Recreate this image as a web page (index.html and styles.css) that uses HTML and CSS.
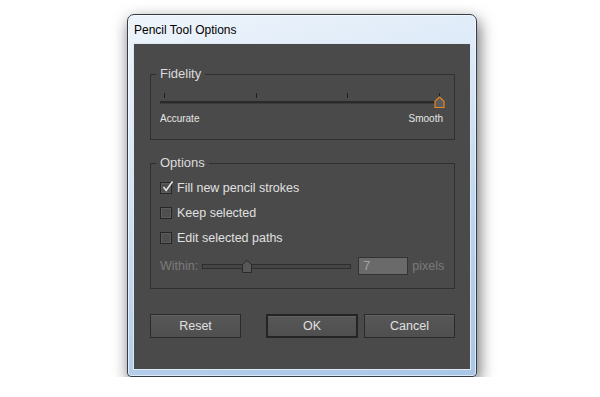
FILE: index.html
```html
<!DOCTYPE html>
<html lang="en">
<head>
  <meta charset="UTF-8" />
  <title>Pencil Tool Options</title>
  <link rel="stylesheet" href="styles.css">
</head>
<body>
  <div class="window">
    <div class="titlebar">Pencil Tool Options</div>

    <div class="content">
      <!-- Fidelity -->
      <fieldset class="group fidelity">
        <legend>Fidelity</legend>
        <div class="slider">
          <div class="ticks"><span></span><span></span><span></span><span></span></div>
          <div class="track"></div>
          <svg class="thumb" width="11" height="12" viewBox="0 0 11 12">
            <path d="M1 11.5V5.2L5.5 1L10 5.2V11.5Z" fill="#5c5c5c" stroke="#e5871f" stroke-width="1.2"/>
          </svg>
        </div>
        <div class="scale-labels">
          <span>Accurate</span>
          <span>Smooth</span>
        </div>
      </fieldset>

      <!-- Options -->
      <fieldset class="group options">
        <legend>Options</legend>
        <div class="check-row">
          <span class="checkbox">
            <svg width="14" height="14" viewBox="0 0 14 14">
              <path d="M2.5 7L5.2 10.5L11.5 1.5" fill="none" stroke="#e2e2e2" stroke-width="1.6"/>
            </svg>
          </span>
          Fill new pencil strokes
        </div>
        <div class="check-row"><span class="checkbox"></span>Keep selected</div>
        <div class="check-row"><span class="checkbox"></span>Edit selected paths</div>
        <div class="within-row">
          <span class="dim">Within:</span>
          <div class="mini-slider">
            <div class="mini-track"></div>
            <svg class="mini-thumb" width="10" height="13" viewBox="0 0 10 13">
              <path d="M0.5 12.5V4.5L5 0.5L9.5 4.5V12.5Z" fill="#585858" stroke="#2a2a2a" stroke-width="1"/>
            </svg>
          </div>
          <div class="num-box">7</div>
          <span class="dim">pixels</span>
        </div>
      </fieldset>

      <div class="buttons">
        <button class="btn reset">Reset</button>
        <button class="btn ok">OK</button>
        <button class="btn">Cancel</button>
      </div>
    </div>
  </div>
</body>
</html>
```

FILE: styles.css
```css
:root {
  --panel: #4a4a4a;
  --line: #2f2f2f;
  --text: #e0e0e0;
  --dim: #7b7b7b;
}

* { box-sizing: border-box; }

body {
  margin: 0;
  background: #fff;
  padding: 14px 0 0 127px;
  font-family: "Liberation Sans", Arial, sans-serif;
}

/* Aero window frame */
.window {
  width: 350px;
  height: 363px;
  border: 1px solid #333c47;
  border-radius: 7px 7px 4px 4px;
  background: linear-gradient(165deg, #eef4fb 0%, #dbe9f8 30%, #c3daf2 55%, #b2cdea 80%, #a9c7e7 100%);
  box-shadow: 2px 6px 16px rgba(0,0,0,0.6), inset 0 0 0 1px rgba(255,255,255,0.6);
  padding: 0 5px 6px;
  display: flex;
  flex-direction: column;
}

.titlebar {
  height: 28px;
  line-height: 30px;
  padding-left: 1px;
  font-size: 12px;
  color: #000;
}

.content {
  flex: 1;
  background: var(--panel);
  border: 1px solid #dde8f4;
  padding: 23px 15px 0 16px;
}

/* Group boxes */
.group {
  margin: 0;
  min-width: 0;
  border: 1px solid var(--line);
  padding: 0 9px;
}
.group legend {
  margin-left: -4px;
  padding: 0 4px;
  height: 14px;
  line-height: 14px;
  font-size: 13px;
  color: #dcdcdc;
}

.fidelity { padding-top: 11px; padding-bottom: 14px; }

.slider {
  position: relative;
  height: 16px;
  padding-top: 1px;
}
.ticks {
  display: flex;
  justify-content: space-between;
  padding: 0 5px 0 4px;
  height: 5px;
}
.ticks span {
  width: 1px;
  background: #1e1e1e;
}
.track {
  margin-top: 3px;
  width: 280px;
  height: 3px;
  background: #2a2a2a;
  border-bottom: 1px solid #3a3a3a;
}
.thumb {
  position: absolute;
  left: 274px;
  top: 4px;
}

.scale-labels {
  display: flex;
  justify-content: space-between;
  margin-top: 5px;
  padding-right: 2px;
  line-height: 12px;
  font-size: 10px;
  color: #e6e6e6;
}

.options {
  margin-top: 16px;
  padding-top: 5px;
  padding-bottom: 10px;
}

.check-row {
  display: flex;
  align-items: center;
  height: 25px;
  font-size: 12.5px;
  color: var(--text);
}
.checkbox {
  position: relative;
  width: 12px;
  height: 12px;
  margin-right: 5px;
  border: 1px solid #262626;
  background: #4f4f4f;
  box-shadow: inset 0 0 0 1px #5c5c5c;
}
.checkbox svg {
  position: absolute;
  left: 0;
  top: -3px;
}

.within-row {
  display: flex;
  align-items: center;
  height: 24px;
  margin-top: 4px;
  font-size: 12.5px;
}
.dim { color: var(--dim); }

.mini-slider {
  position: relative;
  width: 149px;
  height: 13px;
  margin-left: 4px;
  display: flex;
  align-items: center;
}
.mini-track {
  width: 100%;
  height: 5px;
  border: 1px solid #2e2e2e;
  background: #454545;
}
.mini-thumb {
  position: absolute;
  left: 40px;
  top: 0;
}

.num-box {
  width: 50px;
  height: 18px;
  margin: 0 4px 0 7px;
  padding-left: 4px;
  border: 1px solid #333;
  background: #6a6a6a;
  color: #a4a4a4;
  line-height: 16px;
}

/* Buttons */
.buttons {
  display: flex;
  margin-top: 25px;
}
.btn {
  width: 91px;
  height: 24px;
  border: 1px solid #2a2a2a;
  background: linear-gradient(#575757, #4f4f4f);
  box-shadow: inset 0 1px 0 rgba(255,255,255,0.07);
  color: var(--text);
  font-family: inherit;
  font-size: 12.5px;
  padding: 0;
}
.reset { margin-right: auto; }
.ok {
  width: 92px;
  margin-right: 6px;
  border: 2px solid #242424;
}
```
